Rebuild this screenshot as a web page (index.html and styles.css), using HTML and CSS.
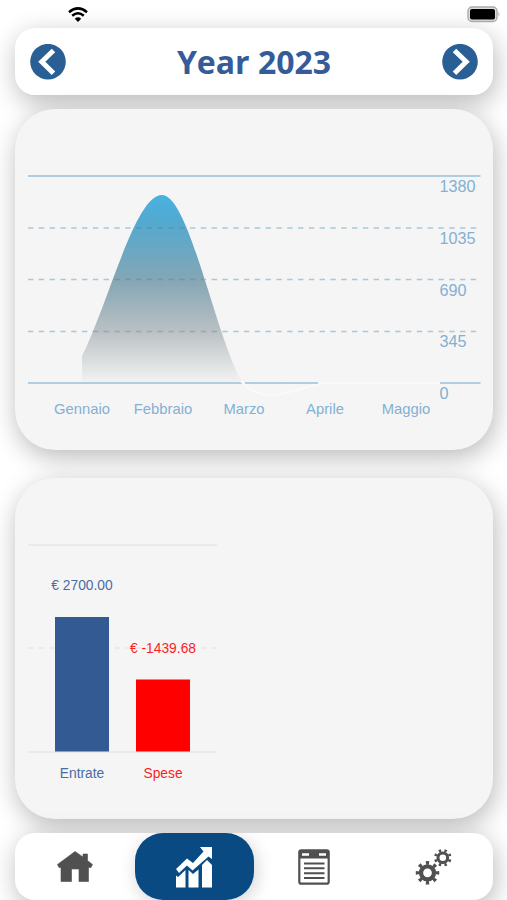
FILE: index.html
```html
<!DOCTYPE html>
<html lang="it">
<head>
  <meta charset="UTF-8" />
  <meta name="viewport" content="width=device-width, initial-scale=1.0" />
  <title>Year 2023</title>
  <link rel="stylesheet" href="styles.css">
</head>
<body>
  <div class="status">
    <svg class="wifi" width="20" height="15" viewBox="0 0 20 15">
      <path d="M1 5.2Q10-2.4 19 5.2M4.2 8.8Q10 3.8 15.8 8.8" fill="none" stroke="#000" stroke-width="2.5" />
      <path d="M6.8 11.7Q10 9 13.2 11.7L10 15Z" />
    </svg>
    <svg class="battery" width="34" height="17" viewBox="0 0 34 17">
      <rect x="1" y="1" width="29" height="14.5" rx="4" fill="#ddd" stroke="#aaa" stroke-width="1.4" />
      <rect x="3" y="3" width="25" height="10.5" rx="2" />
      <path d="M31.5 6q2 2.2 0 4.4z" fill="#aaa" />
    </svg>
  </div>

  <header class="card header">
    <button class="arrow">
      <svg width="36" height="36" viewBox="0 0 36 36">
        <circle cx="18" cy="17.700" r="17.8" fill="#295f95" />
        <path d="M23.500 6.500L11.800 17.700L23.500 29.300" fill="none" stroke="#fff" stroke-width="5" />
      </svg>
    </button>
    <h1>Year 2023</h1>
    <button class="arrow">
      <svg width="36" height="36" viewBox="0 0 36 36">
        <circle cx="18" cy="17.700" r="17.8" fill="#295f95" />
        <path d="M12.500 6.500L24.200 17.700L12.500 29.300" fill="none" stroke="#fff" stroke-width="5" />
      </svg>
    </button>
  </header>

  <section class="card panel">
    <svg class="chart line-chart" width="478" height="341" viewBox="15 109 478 341">
      <defs>
        <linearGradient id="area" x1="0" y1="195" x2="0" y2="383" gradientUnits="userSpaceOnUse">
          <stop offset="0" stop-color="#48b2e0" />
          <stop offset="0.14" stop-color="#52a9d0" />
          <stop offset="0.45" stop-color="#84a6b5" />
          <stop offset="0.72" stop-color="#b9c0c3" />
          <stop offset="1" stop-color="#f3f3f3" />
        </linearGradient>
      </defs>
      <g class="grid">
        <path d="M28 176H480.500M28 383H480.500" />
        <path class="dashed" d="M28 228H477M28 279.500H477M28 331.500H477" />
      </g>
      <path d="M82 382V356C109 302 135 195 162 195C189 195 215 335 242 382Z" fill="url(#area)" />
      <path class="dashed over" d="M136 228H188M114.400 279.500H203M92.800 331.500H220" />
      <path d="M241 381C260 404 286 394 321 383H440" fill="#f6f6f6" stroke="#fafafa" stroke-width="2" />
      <path d="M245 383H318" stroke="#b1cde2" stroke-width="1.800" />
      <g class="values">
        <text x="439.500" y="192.200">1380</text>
        <text x="439.500" y="243.800">1035</text>
        <text x="439.500" y="295.500">690</text>
        <text x="439.500" y="347.200">345</text>
        <text x="439.500" y="399">0</text>
      </g>
      <g class="months">
        <text x="82" y="413.700">Gennaio</text>
        <text x="163" y="413.700">Febbraio</text>
        <text x="244" y="413.700">Marzo</text>
        <text x="325" y="413.700">Aprile</text>
        <text x="406" y="413.700">Maggio</text>
      </g>
    </svg>
  </section>

  <section class="card panel totals">
    <svg class="chart bar-chart" width="478" height="341" viewBox="15 478 478 341">
      <path d="M28 545H217M28 752H217" stroke="#e6e6e6" stroke-width="1.500" />
      <path d="M28 648H217" stroke="#e6e6e6" stroke-width="1.500" stroke-dasharray="5.400 5.400" />
      <rect x="55" y="617" width="54" height="134.500" fill="#335a93" />
      <rect x="136" y="679.500" width="54" height="72" fill="#f00" />
      <g class="income">
        <text x="82" y="589.500">€ 2700.00</text>
        <text x="82" y="778.300">Entrate</text>
      </g>
      <g class="expense">
        <text x="163" y="652.500">€ -1439.68</text>
        <text x="163" y="778.300">Spese</text>
      </g>
    </svg>
  </section>

  <nav class="card nav">
    <a class="tab">
      <svg width="36" height="32" viewBox="0 0 36 32">
        <path d="M18 .5L26 6V3H30.500V9.500L35.500 13.500L34 16.500H31.500V30.500H22V18H14.500V30.500H4V16.500H2L.5 13.500Z" fill="#505050" stroke="#505050" stroke-width=".6" stroke-linejoin="round" />
      </svg>
    </a>
    <a class="tab active">
      <svg width="38" height="42" viewBox="0 0 38 42">
        <g fill="#fff">
          <path d="M1 29.500L3 31L10.500 24V41.500H1Z" />
          <path d="M13.500 24L18 28L23.500 23.500V41.500H13.500Z" />
          <path d="M27 19L32 14L37 19V41.500H27Z" />
          <path d="M25 1H37V13L33.500 10.500L17.500 24.500L12 19.500L4 27L1 23L12 12.500L18 17L28.500 5.500Z" />
        </g>
      </svg>
    </a>
    <a class="tab">
      <svg width="32" height="36" viewBox="0 0 32 36">
        <rect x="1.300" y="1.300" width="29.400" height="33.400" rx="2" fill="#fff" stroke="#505050" stroke-width="2.200" />
        <path d="M1 1H31V9.500H1Z" fill="#505050" />
        <path d="M4 5.500H11M21 5.500H28" stroke="#fff" stroke-width="2.400" />
        <path d="M6 14.500H26.500M6 19.300H26.500M6 24.200H26.500M6 29H26.500" stroke="#505050" stroke-width="2" />
      </svg>
    </a>
    <a class="tab">
      <svg width="37" height="36" viewBox="0 0 37 36">
        <g fill="none" stroke="#505050">
          <circle cx="12.500" cy="23.800" r="6.500" stroke-width="4.300" />
          <circle cx="12.500" cy="23.800" r="9.900" stroke-width="3.700" pathLength="8" stroke-dasharray=".42 .58" stroke-dashoffset=".21" />
          <circle cx="27.800" cy="8.800" r="4.800" stroke-width="3" />
          <circle cx="27.800" cy="8.800" r="7.300" stroke-width="2.900" pathLength="8" stroke-dasharray=".42 .58" stroke-dashoffset=".71" />
        </g>
      </svg>
    </a>
  </nav>
</body>
</html>
```
FILE: styles.css
```css
* { box-sizing: border-box; }
body { margin: 0; height: 900px; padding: 0 14px 0 15px; overflow: hidden; background: #fff; font-family: "Liberation Sans", Arial, sans-serif; }

.status { height: 28px; padding: 6px 0 0 53px; display: flex; justify-content: space-between; align-items: flex-start; }
.status svg { position: relative; z-index: 1; }
.wifi { margin-top: 1px; }
.battery { margin-right: -8px; }

.card { box-shadow: 2px 7px 26px rgba(0, 0, 0, 0.28); }
.header { display: flex; justify-content: space-between; align-items: center; height: 67px; padding: 0 15px; border-radius: 20px; background: #fff; }
h1 { margin: 0; color: #355c98; font-family: "Open Sans", sans-serif; font-size: 32px; font-weight: 700; line-height: 44px; }
.arrow { display: block; padding: 0; border: none; background: none; cursor: pointer; }
.arrow svg { display: block; }

.panel { height: 341px; margin-top: 14px; border-radius: 40px; background: #f5f5f5; overflow: hidden; }
.totals { margin-top: 28px; }
.chart { display: block; }

.grid { fill: none; stroke: #b1cde2; stroke-width: 1.8; }
.dashed { stroke: #a9c8da; stroke-width: 1.6; stroke-dasharray: 5.4 5.4; }
.over { stroke: #46708a; stroke-opacity: 0.3; }
.line-chart text { fill: #83b0d3; }
.values { font-size: 16.2px; }
.months { font-size: 14.8px; text-anchor: middle; }
.bar-chart text { font-size: 13.8px; text-anchor: middle; }
.income { fill: #4b6ca3; }
.expense { fill: #fa1e1e; }

.nav { display: flex; height: 67px; margin-top: 14px; border-radius: 20px; background: #fff; overflow: hidden; }
.tab { flex: 1; display: flex; align-items: center; justify-content: center; border-radius: 28px; }
.active { background: #0a4a82; box-shadow: 2px 4px 18px rgba(0, 0, 0, 0.18); }
```
